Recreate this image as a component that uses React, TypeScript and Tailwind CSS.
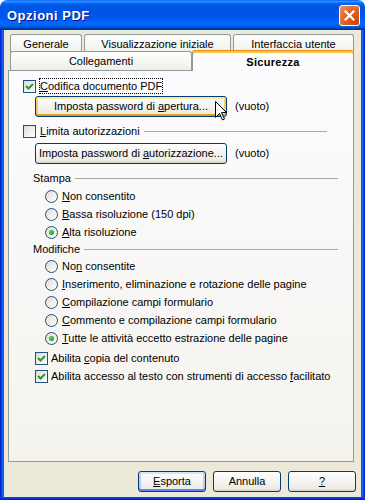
import React from "react";

const U = ({ children }: { children: React.ReactNode }) => <span className="underline underline-offset-[1px]">{children}</span>;

function Check({ checked }: { checked?: boolean }) {
  return (
    <div className="w-[13px] h-[13px] shrink-0 border border-[#1c5180] bg-[linear-gradient(135deg,#dcdcd7,#ffffff)] flex items-center justify-center">
      {checked && (
        <svg width="9" height="9" viewBox="0 0 9 9">
          <path d="M1 4 L3.5 6.5 L8 2" stroke="#21a121" strokeWidth="2" fill="none" />
        </svg>
      )}
    </div>
  );
}

function Radio({ checked }: { checked?: boolean }) {
  return (
    <div className="w-[13px] h-[13px] shrink-0 rounded-full border border-[#1c5180] bg-[linear-gradient(135deg,#dcdcd7,#ffffff)] flex items-center justify-center">
      {checked && <div className="w-[5px] h-[5px] rounded-full bg-[radial-gradient(circle_at_40%_40%,#55d551,#21a121_70%)]" />}
    </div>
  );
}

function XPButton({ children, className = "", variant }: { children: React.ReactNode; className?: string; variant?: "hover" | "default" }) {
  const sh =
    variant === "hover"
      ? "shadow-[inset_0_-2px_#e5a01a,inset_0_2px_#ffe7a2,inset_2px_0_#fbca5e,inset_-2px_0_#fbca5e]"
      : variant === "default"
      ? "shadow-[inset_0_-2px_#6982ee,inset_0_2px_#cee7ff,inset_2px_0_#bccbf5,inset_-2px_0_#bccbf5]"
      : "";
  return (
    <div
      className={`h-[21px] shrink-0 border border-[#003c74] rounded-[3px] bg-[linear-gradient(180deg,#ffffff,#ecebe6_86%,#d6d0c5)] flex items-center justify-center text-black ${sh} ${className}`}
    >
      <span className="whitespace-nowrap">{children}</span>
    </div>
  );
}

function Tab({ children, className = "" }: { children: React.ReactNode; className?: string }) {
  return (
    <div
      className={`h-[19px] shrink-0 border border-b-0 border-[#919b9c] rounded-t-[3px] bg-[linear-gradient(180deg,#ffffff,#fafaf9_26%,#f0f0ea_95%,#ecebe6)] flex items-center justify-center ${className}`}
    >
      {children}
    </div>
  );
}

export default function App() {
  return (
    <div className="relative w-[365px] h-[500px] font-['Liberation_Sans',Arial,sans-serif] text-[11px] whitespace-nowrap text-black bg-white">
      {/* title bar */}
      <div className="h-[30px] rounded-t-[7px] bg-[linear-gradient(180deg,#0058ee_0%,#3a93ff_4%,#288eff_6%,#127dff_8%,#036ffc_10%,#0262ee_14%,#0057e5_20%,#0054e3_24%,#0055eb_56%,#005bf5_66%,#026afe_76%,#0062ef_86%,#0052d6_92%,#0040ab_94%,#003092_100%)] flex items-center pl-[7px] pr-[5px]">
        <span className="font-bold text-[13px] text-white [text-shadow:1px_1px_#0f1089] tracking-[0.5px] pt-[1px]">Opzioni PDF</span>
        <div className="ml-auto w-[21px] h-[21px] rounded-[3px] border border-white bg-[radial-gradient(circle_at_90%_90%,#cc4600,#dc6527_55%,#f08e5d)] flex items-center justify-center">
          <svg width="11" height="11" viewBox="0 0 11 11">
            <path d="M1.5 1.5 L9.5 9.5 M9.5 1.5 L1.5 9.5" stroke="white" strokeWidth="2.2" strokeLinecap="square" />
          </svg>
        </div>
      </div>
      {/* body with frame */}
      <div className="flex h-[467px]">
        <div className="w-[4px] shrink-0 bg-[linear-gradient(90deg,#0019cf,#0831d9_30%,#166aee_60%,#0b4de5)]" />
        <div className="flex-1 min-w-0 flex flex-col bg-[#ece9d8]">
          <div className="pt-[4px] pl-[6px] pr-[7px]">
            {/* tab row 1 */}
            <div className="flex h-[18px] items-start gap-[2px]">
              <Tab className="w-[72px]">Generale</Tab>
              <Tab className="w-[147px]">Visualizzazione iniziale</Tab>
              <Tab className="w-[121px]">Interfaccia utente</Tab>
            </div>
            {/* tab row 2 */}
            <div className="flex h-[18px] items-end">
              <Tab className="w-[182px] h-[18px]">Collegamenti</Tab>
              <div className="relative z-10 w-[162px] h-[21px] -mb-[1px] border border-b-0 border-[#919b9c] border-t-[#e68b2c] rounded-t-[3px] bg-[#fcfcfe] shadow-[inset_0_2px_#ffc83c] flex items-center justify-center pt-[2px] font-bold tracking-[0.3px]">
                Sicurezza
              </div>
            </div>
          </div>
          {/* panel */}
          <div className="ml-[4px] mr-[7px] h-[392px] border border-[#919b9c] bg-[linear-gradient(180deg,#fcfcfe,#f4f3ee)] flex flex-col pl-[14px] pr-[15px]">
            <div className="mt-[7px] h-[16px] flex items-center">
              <Check checked />
              <span className="ml-[3px] px-[1px] outline-1 outline-dotted outline-black -outline-offset-1 leading-[16px] h-[16px]">
                <U>C</U>odifica documento PDF
              </span>
            </div>
            <div className="mt-[2px] flex items-center">
              <XPButton variant="hover" className="ml-[12px] w-[192px] h-[20px]">
                Imposta password di <U>a</U>pertura...
              </XPButton>
              <span className="ml-[8px]">(vuoto)</span>
            </div>
            <div className="mt-[6px] h-[16px] flex items-center pr-[11px]">
              <Check />
              <span className="ml-[4px]">
                <U>L</U>imita autorizzazioni
              </span>
              <div className="ml-[4px] flex-1 h-px bg-[#aca899]" />
            </div>
            <div className="mt-[4px] flex items-center">
              <XPButton className="ml-[12px] w-[192px] h-[20px]">
                Imposta password di <U>a</U>utorizzazione...
              </XPButton>
              <span className="ml-[8px]">(vuoto)</span>
            </div>
            <div className="mt-[6px] h-[16px] flex items-center ml-[10px]">
              <span>Stampa</span>
              <div className="ml-[4px] flex-1 h-px bg-[#aca899]" />
            </div>
            <div className="mt-[1px] ml-[22px] flex flex-col">
              <div className="h-[18px] flex items-center">
                <Radio />
                <span className="ml-[4px]">
                  <U>N</U>on consentito
                </span>
              </div>
              <div className="h-[18px] flex items-center">
                <Radio />
                <span className="ml-[4px]">
                  <U>B</U>assa risoluzione (150 dpi)
                </span>
              </div>
              <div className="h-[18px] flex items-center">
                <Radio checked />
                <span className="ml-[4px]">
                  <U>A</U>lta risoluzione
                </span>
              </div>
            </div>
            <div className="h-[16px] flex items-center ml-[10px]">
              <span>Modifiche</span>
              <div className="ml-[4px] flex-1 h-px bg-[#aca899]" />
            </div>
            <div className="ml-[22px] flex flex-col">
              <div className="h-[18px] flex items-center">
                <Radio />
                <span className="ml-[4px]">
                  No<U>n</U> consentite
                </span>
              </div>
              <div className="h-[18px] flex items-center">
                <Radio />
                <span className="ml-[4px]">
                  <U>I</U>nserimento, eliminazione e rotazione delle pagine
                </span>
              </div>
              <div className="h-[18px] flex items-center">
                <Radio />
                <span className="ml-[4px]">
                  <U>C</U>ompilazione campi formulario
                </span>
              </div>
              <div className="h-[18px] flex items-center">
                <Radio />
                <span className="ml-[4px]">
                  <U>C</U>ommento e compilazione campi formulario
                </span>
              </div>
              <div className="h-[18px] flex items-center">
                <Radio checked />
                <span className="ml-[4px]">
                  <U>T</U>utte le attività eccetto estrazione delle pagine
                </span>
              </div>
            </div>
            <div className="mt-[2px] ml-[12px] flex flex-col">
              <div className="h-[18px] flex items-center">
                <Check checked />
                <span className="ml-[3px]">
                  Abilita <U>c</U>opia del contenuto
                </span>
              </div>
              <div className="h-[18px] flex items-center">
                <Check checked />
                <span className="ml-[3px]">
                  Abilita accesso al testo con strumenti di accesso <U>f</U>acilitato
                </span>
              </div>
            </div>
          </div>
          {/* bottom buttons */}
          <div className="mt-[9px] flex justify-end gap-[7px] pr-[5px]">
            <XPButton variant="default" className="w-[68px]">
              <U>E</U>sporta
            </XPButton>
            <XPButton className="w-[68px]">Annulla</XPButton>
            <XPButton className="w-[68px]">
              <U>?</U>
            </XPButton>
          </div>
        </div>
        <div className="w-[4px] shrink-0 bg-[linear-gradient(90deg,#0b4de5,#166aee_40%,#0831d9_70%,#0019cf)]" />
      </div>
      <div className="h-[3px] bg-[linear-gradient(180deg,#0b4de5,#0831d9_50%,#001ea0)]" />
      {/* mouse cursor */}
      <svg className="absolute left-[215px] top-[101px]" width="13" height="20" viewBox="0 0 13 20">
        <path d="M0.5 0.5 L0.5 16.5 L4.5 12.5 L7.5 19 L9.5 18 L6.5 11.5 L11.5 11.5 Z" fill="white" stroke="black" strokeWidth="1" strokeLinejoin="miter" />
      </svg>
    </div>
  );
}
